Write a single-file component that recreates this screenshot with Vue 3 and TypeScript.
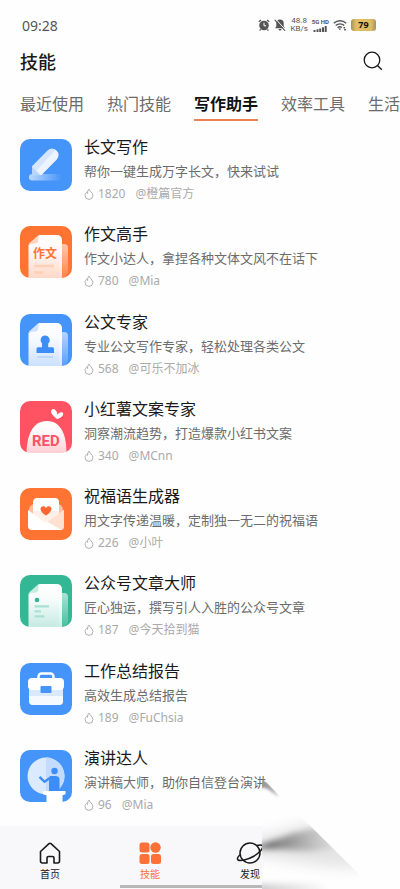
<script setup lang="ts">
interface Skill {
  icon: string
  title: string
  desc: string
  heat: number
  author: string
}

const tabs: string[] = ['最近使用', '热门技能', '写作助手', '效率工具', '生活']
const activeTab = '写作助手'

const skills: Skill[] = [
  { icon: 'pen', title: '长文写作', desc: '帮你一键生成万字长文，快来试试', heat: 1820, author: '@橙篇官方' },
  { icon: 'essay', title: '作文高手', desc: '作文小达人，拿捏各种文体文风不在话下', heat: 780, author: '@Mia' },
  { icon: 'stamp', title: '公文专家', desc: '专业公文写作专家，轻松处理各类公文', heat: 568, author: '@可乐不加冰' },
  { icon: 'red', title: '小红薯文案专家', desc: '洞察潮流趋势，打造爆款小红书文案', heat: 340, author: '@MCnn' },
  { icon: 'letter', title: '祝福语生成器', desc: '用文字传递温暖，定制独一无二的祝福语', heat: 226, author: '@小叶' },
  { icon: 'article', title: '公众号文章大师', desc: '匠心独运，撰写引人入胜的公众号文章', heat: 187, author: '@今天拾到猫' },
  { icon: 'case', title: '工作总结报告', desc: '高效生成总结报告', heat: 189, author: '@FuChsia' },
  { icon: 'speech', title: '演讲达人', desc: '演讲稿大师，助你自信登台演讲', heat: 96, author: '@Mia' },
]
</script>

<template>
  <div class="app">
    <header class="status">
      <span class="clock">09:28</span>
      <div class="indicators">
        <svg width="12" height="12" viewBox="0 0 12 12" aria-hidden="true">
          <circle cx="6" cy="6.5" r="4.8" fill="#555" />
          <path d="M.8 2.8 3 .9M11.2 2.8 9 .9M2.6 10.5l-1 1M9.4 10.5l1 1" stroke="#555" stroke-width="1.3" />
          <path d="M6 3.8v3h2.2" fill="none" stroke="#fff" stroke-width="1" />
        </svg>
        <svg width="12" height="12" viewBox="0 0 12 12" aria-hidden="true">
          <path d="M6 .5a3.7 3.7 0 0 0-3.7 3.7v3L1 9.3h10L9.7 7.2v-3A3.7 3.7 0 0 0 6 .5zM4.5 10h3a1.5 1.5 0 0 1-3 0z" fill="#555" />
          <path d="m1.800.2 10 11" stroke="#fff" stroke-width="1" />
          <path d="m.7.8 10.400 11" stroke="#555" stroke-width="1.1" />
        </svg>
        <span class="speed"><span>48.8</span><span>KB/s</span></span>
        <span class="network">
          <span>5G HD</span>
          <svg width="14" height="6" viewBox="0 0 14 6" aria-hidden="true">
            <path d="M.5 4h2v2h-2zM3.5 3.3h2V6h-2zM6.2 2.5h2V6h-2zM9 1.3h2V6H9zM11.7 0h2v6h-2z" fill="#555" />
          </svg>
        </span>
        <svg width="14" height="12" viewBox="0 0 14 12" aria-hidden="true">
          <path d="M.8 4.2a9 9 0 0 1 12.4 0M2.7 6.6a6.2 6.2 0 0 1 8.6 0M4.6 8.8a3.6 3.6 0 0 1 4.3-.3" fill="none" stroke="#555" stroke-width="1.4" />
          <path d="m5.2 9.5 3 .1-1.4 1.7zM10.5 8h1.7v1.6h-1.7zM11.2 10h1.7v1.5h-1.7z" fill="#555" />
        </svg>
        <span class="battery">79</span>
      </div>
    </header>

    <div class="heading">
      <h1>技能</h1>
      <button class="search" type="button" aria-label="搜索">
        <svg width="20" height="20" viewBox="0 0 20 20" aria-hidden="true">
          <circle cx="9" cy="9" r="7.8" fill="none" stroke="#1a1a1a" stroke-width="1.3" />
          <path d="m14.5 14.5 4.3 4.2" stroke="#1a1a1a" stroke-width="1.4" />
        </svg>
      </button>
    </div>

    <nav class="tabs">
      <a v-for="tab in tabs" :key="tab" href="#" :class="['tab', { active: tab === activeTab }]">{{ tab }}</a>
    </nav>

    <main class="list">
      <article v-for="skill in skills" :key="skill.title" class="skill">
        <svg class="tile" width="52" height="52" viewBox="0 0 52 52" aria-hidden="true">
          <defs>
            <linearGradient :id="'sheet-' + skill.icon" x1="0" y1="0" x2="0" y2="1">
              <stop offset="0" stop-color="#fff" />
              <stop offset=".35" stop-color="#fff" stop-opacity=".96" />
              <stop offset="1" stop-color="#fff" stop-opacity=".72" />
            </linearGradient>
            <linearGradient :id="'fade-' + skill.icon" x1="0" y1="0" x2="1" y2="0">
              <stop offset="0" stop-color="#fff" stop-opacity=".65" />
              <stop offset="1" stop-color="#fff" stop-opacity="0" />
            </linearGradient>
            <linearGradient :id="'back-' + skill.icon" x1="0" y1="0" x2="0" y2="1">
              <stop offset="0" stop-color="#fff" stop-opacity=".6" />
              <stop offset="1" stop-color="#fff" stop-opacity=".1" />
            </linearGradient>
          </defs>
          <rect width="52" height="52" rx="10" :class="'bg-' + skill.icon" />

          <g v-if="skill.icon === 'pen'">
            <rect x="9" y="35" width="33" height="6.5" rx="3.2" fill="url(#fade-pen)" />
            <path d="M12 27.5 27.5 11.8a6.3 6.3 0 0 1 9.3 8.7L21.5 36H12z" fill="#edf4ff" />
            <path d="m12 27.5 8.7 8.7H12z" fill="#b9d5fd" />
            <path d="M12 27.5 27.5 11.8a6.3 6.3 0 0 1 8-.8L16.500 31.500z" fill="#d5e5ff" />
          </g>

          <g v-else-if="skill.icon === 'essay' || skill.icon === 'stamp' || skill.icon === 'article'">
            <path d="M39 18h5a4 4 0 0 1 4 4v24a6 6 0 0 1-6 6h-3z" :fill="`url(#back-${skill.icon})`" />
            <path d="M8.5 19.5 19 9h18a5 5 0 0 1 5 5v38H8.5z" :fill="`url(#sheet-${skill.icon})`" />
            <path d="M8.5 19.5c1-1.5 3-2 5-1.8 3 .3 5-1 4.8-4-.1-2 0-3.5 1.7-4.7l-2 .5L9 17.5z" :class="'fold-' + skill.icon" />
            <g v-if="skill.icon === 'essay'">
              <text class="essay-word" x="13" y="32">作文</text>
              <path d="M14 40h20M14 46.5h9" stroke="#ffd0b8" stroke-width="2.4" />
            </g>
            <g v-else-if="skill.icon === 'stamp'">
              <path d="M25 21.5a4.7 4.7 0 0 1 3.2 8.1v3.6h4.3a1.5 1.5 0 0 1 1.5 1.5V39H16.5v-4.3a1.5 1.5 0 0 1 1.5-1.5h4v-3.6a4.7 4.7 0 0 1 3-8.1z" fill="#3d8df8" />
              <path d="M17.5 43H33" stroke="#bdd8ff" stroke-width="2" />
            </g>
            <g v-else>
              <circle cx="17" cy="25" r="2.3" fill="#2fb695" />
              <path d="M14.5 31.3H29M14.5 36.3H21M14.5 41.3h10" stroke="#a9e2d2" stroke-width="2.2" />
            </g>
          </g>

          <g v-else-if="skill.icon === 'red'">
            <path d="M6.5 52C7 35 12 20 27 20s19.5 16 19.5 32z" fill="url(#sheet-red)" />
            <path d="M37 18c-3-2.5-6.5-5.5-5.8-8 .8-2.8 4-2.5 4.8.2.8-.5 1 2 1.500 3.500 1-1.500 3.500-3.400 5.200-2 2 2-2 5.600-5.700 6.300z" fill="#fff" />
            <text class="red-word" x="12" y="45">RED</text>
          </g>

          <g v-else-if="skill.icon === 'letter'">
            <path d="M9 23c0-4 2-7 6-7h22c4 0 6 3 6 7v6H9z" fill="#ffc19c" />
            <path d="M13 14c0-2 1.5-4 4-4h18c3 0 4 2 4 4v22H13z" fill="#fff" />
            <path d="M13 23h26v5L26 35l-13-7z" fill="#fff0e8" />
            <path d="m8 22 18 13 18-13v16a4 4 0 0 1-4 4H12a4 4 0 0 1-4-4z" fill="#fff" />
            <path d="M44 22 27.5 33.7 41.5 42a4 4 0 0 0 2.5-4z" fill="#ffe1d2" />
            <path d="M26 27.5c-3.300-2-5.500-4.400-5.500-6.500 0-3.200 4.200-3.800 5.500-1 1.300-2.800 5.500-2.200 5.500 1 0 2.100-2.200 4.500-5.500 6.500z" fill="#ff6633" />
          </g>

          <g v-else-if="skill.icon === 'case'">
            <path d="M18.5 17v-3.500a3 3 0 0 1 3-3h9a3 3 0 0 1 3 3V17" fill="none" stroke="#fff" stroke-width="2.5" />
            <path d="M9 24h34v14a4 4 0 0 1-4 4H13a4 4 0 0 1-4-4z" fill="#dbe9ff" />
            <path d="M9 33h34v5a4 4 0 0 1-4 4H13a4 4 0 0 1-4-4z" fill="#fff" fill-opacity=".75" />
            <rect x="8" y="15" width="36" height="12" rx="4" fill="#fff" />
            <rect x="20.5" y="23" width="11" height="7" rx="1" fill="#4594fa" />
          </g>

          <g v-else>
            <circle cx="26" cy="26" r="18.5" fill="#dceaff" />
            <path d="M26 7.5a18.5 18.5 0 0 1 0 37z" fill="#c3dbff" />
            <circle cx="34.5" cy="21" r="3.2" fill="#3d8df8" />
            <path d="M30 26h5.500a4 4 0 0 1 4 4v11H29V31z" fill="#3d8df8" />
            <path d="m19.500 26.800 5 5 6.500-4.500" fill="none" stroke="#3d8df8" stroke-width="2.400" />
            <path d="M23 41h22.500v3.200l-3 1V52h-16v-6.800l-3.500-1z" fill="#fff" />
          </g>
        </svg>

        <div class="info">
          <h2>{{ skill.title }}</h2>
          <p class="desc">{{ skill.desc }}</p>
          <p class="meta">
            <svg width="10" height="12" viewBox="0 0 10 12" aria-hidden="true">
              <path d="M5 1c.2 2 3.9 3.600 3.900 6.500a3.900 3.900 0 0 1-7.800 0c0-1.600.7-2.600 1.700-3.400.1.800.4 1.200.8 1.400C3.500 3.500 4 2 5 1z" fill="none" stroke="#b0b0b0" stroke-width="1" />
            </svg>
            <span>{{ skill.heat }}</span>
            <span class="author">{{ skill.author }}</span>
          </p>
        </div>
      </article>
    </main>

    <nav class="bottom">
      <a class="nav-item" href="#">
        <svg width="24" height="24" viewBox="0 0 24 24" aria-hidden="true">
          <path d="M2.500 10.500 11 2.600a1.600 1.600 0 0 1 2 0l8.500 7.900V20a2 2 0 0 1-2 2H16v-5a1.500 1.500 0 0 0-1.500-1.500h-4A1.500 1.500 0 0 0 9 17v5H4.500a2 2 0 0 1-2-2z" fill="none" stroke="#1a1a1a" stroke-width="1.600" stroke-linejoin="round" />
        </svg>
        <span>首页</span>
      </a>
      <a class="nav-item current" href="#">
        <svg width="24" height="24" viewBox="0 0 24 24" aria-hidden="true">
          <g fill="#fd7138">
            <rect x="1.500" y="1.500" width="10" height="10" rx="2.500" />
            <circle cx="17.500" cy="6.500" r="5.200" />
            <rect x="1.500" y="13" width="10" height="10" rx="2.500" />
            <rect x="13" y="13" width="10" height="10" rx="2.500" />
          </g>
        </svg>
        <span>技能</span>
      </a>
      <a class="nav-item" href="#">
        <svg width="28" height="24" viewBox="0 0 28 24" aria-hidden="true">
          <circle cx="14" cy="12" r="10" fill="none" stroke="#1a1a1a" stroke-width="1.500" />
          <path d="M4.500 13.500C1.500 16 .8 18 2 19c2.200 1.400 9 0 15.300-3.500S28 6.800 26.500 4.800c-.8-1-3.500-1-6-.3" fill="none" stroke="#1a1a1a" stroke-width="1.500" />
        </svg>
        <span>发现</span>
      </a>
      <span class="home-bar"></span>
    </nav>

    <svg class="veil" width="138" height="112" viewBox="0 0 138 112" aria-hidden="true">
      <defs>
        <linearGradient id="core" gradientUnits="userSpaceOnUse" x1="0" y1="0" x2="90" y2="0">
          <stop offset="0" stop-color="#444" />
          <stop offset=".2" stop-color="#888" />
          <stop offset=".6" stop-color="#c4c4c4" />
          <stop offset="1" stop-color="#eee" />
        </linearGradient>
        <linearGradient id="foot" gradientUnits="userSpaceOnUse" x1="0" y1="0" x2="70" y2="0">
          <stop offset="0" stop-color="#ccc" />
          <stop offset="1" stop-color="#fff" />
        </linearGradient>
        <filter id="soft" filterUnits="userSpaceOnUse" x="-40" y="0" width="200" height="140">
          <feGaussianBlur stdDeviation="2 3" />
        </filter>
        <filter id="wide" filterUnits="userSpaceOnUse" x="-40" y="0" width="200" height="140">
          <feGaussianBlur stdDeviation="2 7" />
        </filter>
        <filter id="light" filterUnits="userSpaceOnUse" x="-20" y="-10" width="60" height="50">
          <feGaussianBlur stdDeviation="1.500" />
        </filter>
        <clipPath id="diagonal">
          <path d="M0 1 112 112H0z" />
        </clipPath>
      </defs>
      <path d="M10 0h128v112H0V12z" fill="#fefefe" />
      <g clip-path="url(#diagonal)">
        <path d="M-4 4 5 4 17 20 6 12 -4 9z" fill="#999" filter="url(#light)" />
        <path d="M-20 64 40 48 60 48 100 92 50 88 -20 76z" fill="#e4e4e4" filter="url(#wide)" />
        <path d="M-20 68H0L30 57 54 51 74 72 48 74 0 71h-20z" fill="url(#core)" filter="url(#soft)" />
        <path d="M-20 107H60l10 10H-20z" fill="url(#foot)" filter="url(#soft)" />
      </g>
    </svg>
  </div>
</template>

<style>
body {
  margin: 0;
  background: #fff;
}
</style>

<style scoped>
.app {
  position: relative;
  display: flex;
  flex-direction: column;
  min-height: 100vh;
  overflow: hidden;
  color: #1a1a1a;
  background: #fefefe;
  font-family: "Noto Sans", "Noto Sans CJK SC", sans-serif;
}
h1, h2, p {
  margin: 0;
  font-weight: 400;
}
a {
  color: inherit;
  text-decoration: none;
}
.status {
  display: flex;
  align-items: center;
  justify-content: space-between;
  height: 20px;
  padding: 15px 24px 0 22px;
  color: #555;
}
.clock {
  font-size: 14px;
}
.indicators {
  display: flex;
  align-items: center;
  gap: 4px;
}
.speed, .network {
  display: flex;
  flex-direction: column;
  align-items: center;
  font-family: Roboto, sans-serif;
  font-size: 8px;
  line-height: 8px;
}
.network {
  font-size: 6px;
  font-weight: 700;
}
.battery {
  width: 25px;
  border-radius: 3px;
  background: linear-gradient(90deg, #a49265, #dfbd63 20%, #dfbd63 80%, #a49265);
  color: #111;
  font-size: 9px;
  font-weight: 700;
  line-height: 12px;
  text-align: center;
}
.heading {
  display: flex;
  align-items: center;
  justify-content: space-between;
  height: 52px;
  padding: 0 17px 0 20px;
}
h1 {
  font-size: 18px;
  font-weight: 500;
}
.search {
  display: flex;
  padding: 0;
  border: 0;
  background: none;
}
.tabs {
  display: flex;
  gap: 23px;
  height: 34px;
  padding: 0 20px;
  overflow: hidden;
  white-space: nowrap;
}
.tab {
  flex: none;
  height: 34px;
  box-sizing: border-box;
  color: #6c6c6c;
  font-size: 16px;
  line-height: 34px;
}
.active {
  border-bottom: 2px solid #e98253;
  color: #111;
  font-weight: 700;
}
.list {
  display: flex;
  flex: 1;
  flex-direction: column;
  justify-content: space-between;
  gap: 24px;
  padding: 18px 20px 24px;
}
.skill {
  display: flex;
  align-items: flex-start;
  gap: 12px;
  height: 52px;
}
.tile {
  flex: none;
}
.info {
  white-space: nowrap;
}
h2 {
  margin-top: -4px;
  font-size: 16px;
  line-height: 24px;
}
.desc {
  color: #6c6c6c;
  font-size: 13px;
  line-height: 25px;
}
.meta {
  display: flex;
  align-items: center;
  gap: 4px;
  color: #aaa;
  font-size: 12px;
  line-height: 20px;
}
.author {
  margin-left: 6px;
}
.bg-pen, .bg-stamp, .bg-case, .bg-speech { fill: #4594fa; }
.bg-essay, .bg-letter { fill: #ff7433; }
.bg-red { fill: #ff5263; }
.bg-article { fill: #33b795; }
.fold-essay { fill: #ffd5bf; }
.fold-stamp { fill: #cfe2ff; }
.fold-article { fill: #c4ecdf; }
.essay-word {
  fill: #ff7433;
  font-size: 12px;
  font-weight: 700;
}
.red-word {
  fill: #ff5263;
  font-family: Roboto, sans-serif;
  font-size: 15px;
  font-weight: 700;
}
.bottom {
  position: relative;
  display: grid;
  grid-template-columns: repeat(4, 1fr);
  min-height: 63px;
  box-sizing: border-box;
  padding-top: 15px;
  background: #f8f8fa;
}
.nav-item {
  display: flex;
  flex-direction: column;
  align-items: center;
  font-size: 10px;
  line-height: 18px;
}
.current {
  color: #fd7138;
}
.home-bar {
  position: absolute;
  bottom: 1px;
  left: 30%;
  width: 40%;
  height: 3px;
  background: #b8b8b8;
}
.veil {
  position: absolute;
  right: 0;
  bottom: 0;
}
</style>
